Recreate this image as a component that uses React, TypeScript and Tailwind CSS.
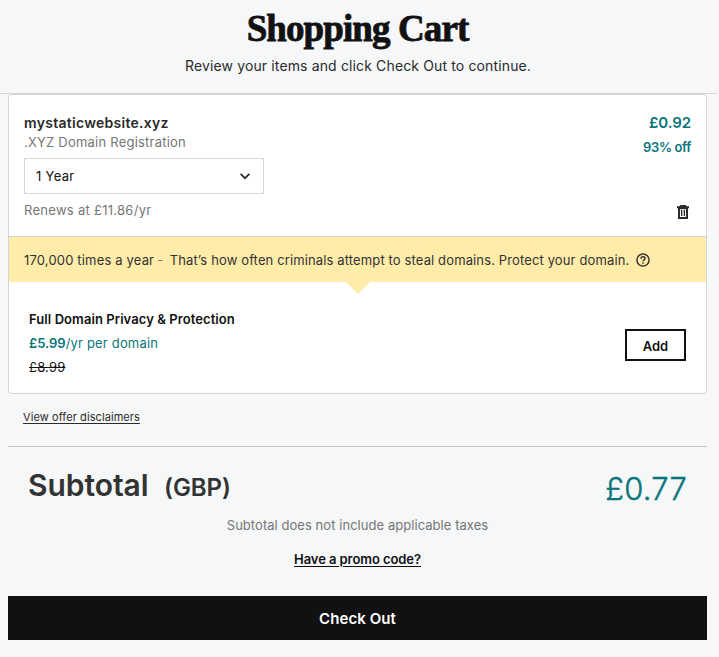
import type { ReactNode } from 'react';

function ChevronDown() {
  return (
    <svg width="12" height="8" viewBox="0 0 12 8" fill="none" stroke="#2b2b2b" strokeWidth="1.7">
      <path d="M1.6 1.9 6 6.2l4.4-4.3" />
    </svg>
  );
}

function TrashIcon() {
  return (
    <svg width="12" height="14" viewBox="0 0 12 14" fill="#2b2b2b">
      <path d="M3.2 0h5.6l.8 1.3H12V3.2H0V1.3h2.4z" />
      <path fillRule="evenodd" d="M1 3h10v11H1zM3 4.2v7.8h6V4.2z" />
      <path d="M4 5h1.3v6H4zM6.7 5H8v6H6.7z" />
    </svg>
  );
}

function HelpIcon() {
  return (
    <svg width="14" height="14" viewBox="0 0 14 14" fill="none" stroke="#3a3833" strokeWidth="1.5">
      <circle cx="7" cy="7" r="6.1" />
      <path d="M5 5.7c0-1.2.9-1.9 2-1.9s2 .7 2 1.7c0 1.4-1.9 1.4-1.9 2.8" />
      <path d="M7.1 9.2v1.5" />
    </svg>
  );
}

function UpsellBanner({ children }: { children: ReactNode }) {
  return (
    <div className="relative flex h-[46px] items-center border-t border-[#d4d4d4] bg-[#ffeca9] pt-[1px] pl-[15px] text-[13px] leading-5 text-[#333] whitespace-pre">
      {children}
      <svg className="absolute top-[45px] left-[337px]" width="24" height="12" viewBox="0 0 24 12" fill="#ffeca9">
        <path d="M0 0h24L12 12z" />
      </svg>
    </div>
  );
}

export default function App() {
  return (
    <div className="h-[657px] overflow-hidden bg-[#f5f7f9] font-[Inter,sans-serif] text-[#2b2b2b]">
      <header className="flex h-[94px] w-[717px] flex-col items-center border-b border-[#d4d4d4]">
        <h1 className="mt-[6px] ml-[-2px] h-[46px] font-['Liberation_Serif',serif] text-[37px] leading-[46px] font-bold tracking-[-0.9px] text-[#111] [-webkit-text-stroke:0.8px_#111]">
          Shopping Cart
        </h1>
        <p className="ml-[-1px] mt-1 h-5 text-[14px] leading-5 tracking-[0.135px]">
          Review your items and click Check Out to continue.
        </p>
      </header>

      <main className="mx-2 w-[699px]">
        <section className="h-[300px] rounded-[4px] border border-[#d4d4d4] bg-white">
          <div className="flex h-[141px] justify-between pr-[15px] pl-[15px]">
            <div className="pt-[18px]">
              <h2 className="h-5 text-[14px] leading-5 font-semibold tracking-[0.28px]">mystaticwebsite.xyz</h2>
              <p className="h-5 text-[13px] leading-[19px] tracking-[0.22px] text-[#767676]">.XYZ Domain Registration</p>
              <div className="mt-[5px] flex h-9 w-[240px] items-center justify-between border border-[#d1d6db] pr-[12px] pl-[11px] text-[13px]">
                <span className="pt-px tracking-[0.3px] text-[#111]">1 Year</span>
                <ChevronDown />
              </div>
              <p className="mt-[6px] h-5 text-[13px] leading-5 tracking-[0.28px] text-[#767676]">Renews at £11.86/yr</p>
            </div>
            <div className="flex flex-col items-end pt-[18px] text-[#09757a]">
              <p className="h-5 text-[15px] leading-5 font-semibold tracking-[-0.1px]">£0.92</p>
              <p className="mt-[4px] h-5 text-[13px] leading-[21px] font-semibold tracking-[-0.35px]">93% off</p>
              <button className="mt-12 mr-[2px]" aria-label="Remove">
                <TrashIcon />
              </button>
            </div>
          </div>

          <UpsellBanner>
            <span className="tracking-[0.17px]">170,000 times a year</span>
            <span className="ml-[3px] w-[12px] text-[#767676]">-</span>
            <span className="ml-[0.5px] tracking-[0.13px]">That’s how often criminals attempt to steal domains. Protect your domain.</span>
            <span className="ml-[6.5px] flex pb-px">
              <HelpIcon />
            </span>
          </UpsellBanner>

          <div className="flex justify-between pt-[26px] pr-5 pl-5">
            <div className="text-[13px] leading-6">
              <h3 className="h-[23px] leading-[23px] font-semibold tracking-[0.08px] text-[#111]">Full Domain Privacy &amp; Protection</h3>
              <p className="h-6 text-[#09757a]">
                <span className="font-semibold">£5.99</span>
                <span className="tracking-[0.18px]">/yr per domain</span>
              </p>
              <p className="h-6 tracking-[0.2px] text-[#111] line-through">£8.99</p>
            </div>
            <button className="mt-[21px] h-8 w-[61px] border-2 border-[#111] pt-[2px] text-[13px] leading-5 font-semibold text-[#111]">
              Add
            </button>
          </div>
        </section>

        <div className="h-[53px] border-b border-[#c8c8c8] pt-[15px] pl-[15px]">
          <a className="block h-4 text-[11px] leading-4 tracking-[0.08px] underline underline-offset-2">View offer disclaimers</a>
        </div>

        <div className="flex h-[68px] justify-between pr-5 pl-5 leading-10 whitespace-nowrap">
          <h2 className="flex items-baseline pt-[18px] font-semibold text-[#333]">
            <span className="text-[30px] tracking-[-0.05px]">Subtotal</span>
            <span className="ml-[15.5px] text-[24px] tracking-[-0.1px]">(GBP)</span>
          </h2>
          <p className="mt-[22px] h-10 text-[31px] font-light tracking-[0.2px] text-[#09757a] [-webkit-text-stroke:0.4px_#09757a]">£0.77</p>
        </div>

        <p className="h-5 text-center text-[13px] leading-5 tracking-[0.05px] text-[#767676]">
          Subtotal does not include applicable taxes
        </p>
        <p className="mt-[14px] h-5 text-center text-[13px] leading-5 font-semibold tracking-[-0.07px] text-[#111] underline underline-offset-2">
          Have a promo code?
        </p>
        <button className="mt-[27px] block h-11 w-full bg-[#111] pt-[2px] text-[15px] font-semibold tracking-[0.07px] text-white">
          Check Out
        </button>
      </main>
    </div>
  );
}
